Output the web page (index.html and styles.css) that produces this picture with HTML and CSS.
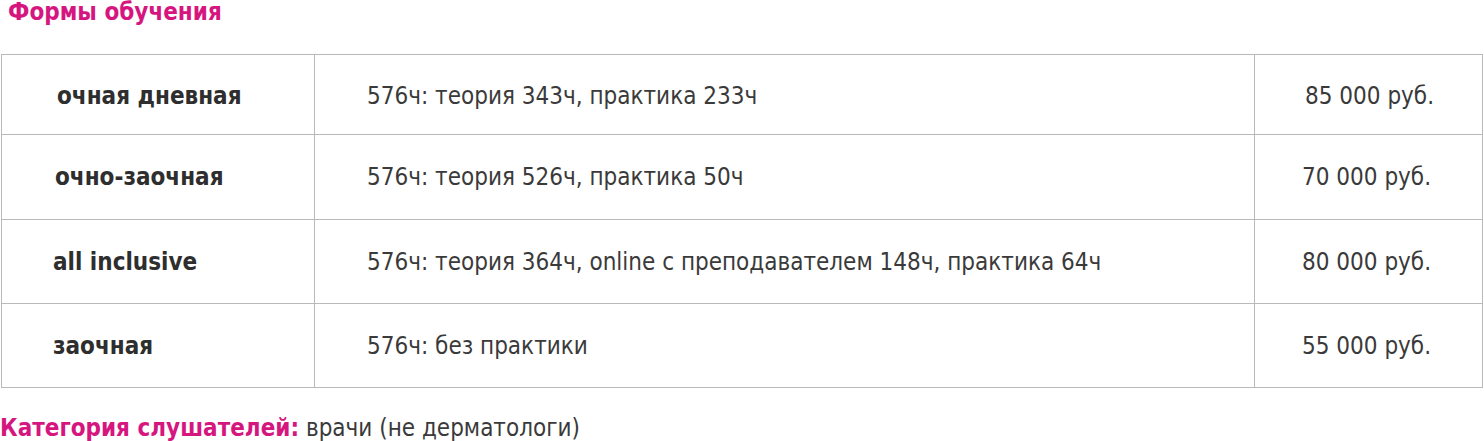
FILE: index.html
```html
<!DOCTYPE html>
<html lang="ru">
<head>
<meta charset="utf-8">
<link rel="stylesheet" href="styles.css">
</head>
<body>
<div class="page">
  <h2 class="title">Формы обучения</h2>
  <table class="forms">
    <colgroup>
      <col class="c1"><col class="c2"><col class="c3">
    </colgroup>
    <tr class="first">
      <td class="name ind4">очная дневная</td>
      <td class="hours">576ч: теория 343ч, практика 233ч</td>
      <td class="price ind3">85 000 руб.</td>
    </tr>
    <tr class="second">
      <td class="name ind2">очно-заочная</td>
      <td class="hours">576ч: теория 526ч, практика 50ч</td>
      <td class="price">70 000 руб.</td>
    </tr>
    <tr>
      <td class="name">all inclusive</td>
      <td class="hours">576ч: теория 364ч, online с преподавателем 148ч, практика 64ч</td>
      <td class="price">80 000 руб.</td>
    </tr>
    <tr>
      <td class="name">заочная</td>
      <td class="hours">576ч: без практики</td>
      <td class="price">55 000 руб.</td>
    </tr>
  </table>
  <p class="category"><span class="label">Категория слушателей:</span> врачи (не дерматологи)</p>
</div>
</body>
</html>
```
FILE: styles.css
```css
html, body {
  margin: 0;
  padding: 0;
  background: #ffffff;
}
.page {
  font-family: "DejaVu Sans Condensed", "DejaVu Sans", Verdana, sans-serif;
  font-stretch: condensed;
  color: #3a3a3a;
  font-size: 24px;
}
.title {
  margin: 0;
  padding: 0 0 0 8px;
  height: 54px;
  line-height: 24px;
  font-size: 24px;
  font-weight: bold;
  color: #d6167f;
}
.forms {
  margin-left: 1px;
  width: 1481px;
  border-collapse: collapse;
  table-layout: fixed;
}
.c1 { width: 313px; }
.c2 { width: 940px; }
.c3 { width: 228px; }
.forms td {
  border: 1px solid #b9b9b9;
  height: 83px;
  padding: 0;
  vertical-align: middle;
}
.forms .first td {
  height: 76px;
  padding-top: 3px;
}
.forms .second td {
  height: 84px;
}
.forms .name {
  padding-left: 51px;
  font-weight: bold;
  color: #2e2e2e;
}
.forms .name.ind4 { padding-left: 55px; }
.forms .name.ind2 { padding-left: 53px; }
.forms .hours {
  padding-left: 52px;
}
.forms .price {
  padding-left: 47px;
}
.forms .price.ind3 { padding-left: 50px; }
.category {
  margin: 26px 0 0 0;
  line-height: 28px;
}
.label {
  font-weight: bold;
  color: #d6167f;
}
```
